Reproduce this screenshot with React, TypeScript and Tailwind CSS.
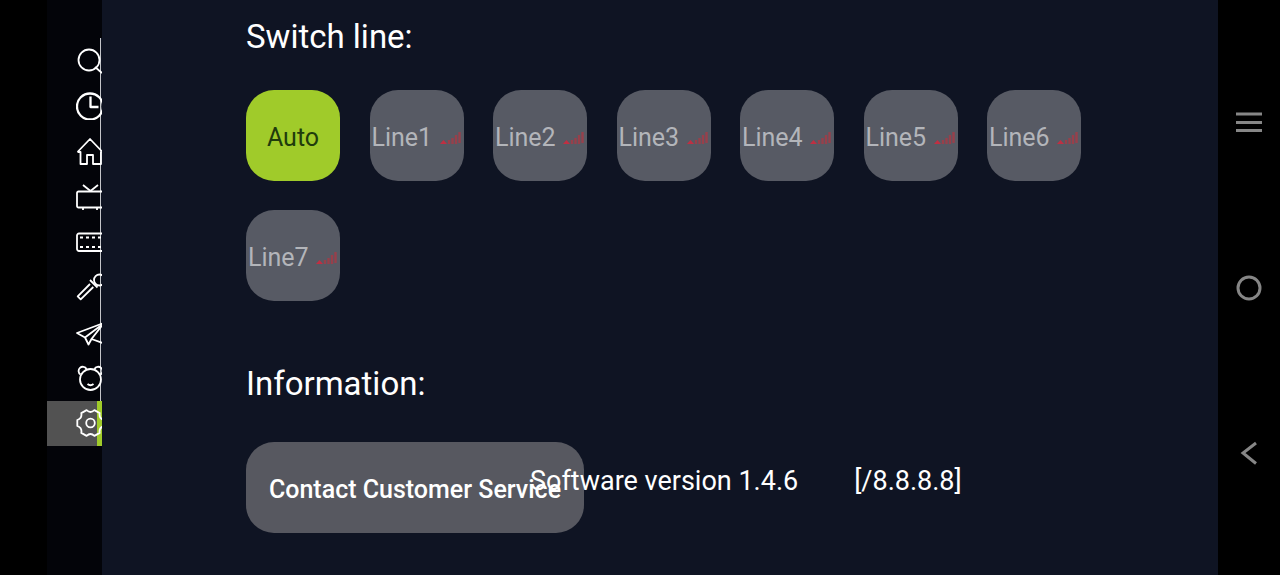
import type { ReactNode } from 'react';

const navItems: { label: string; icon: ReactNode }[] = [
  {
    label: 'Search',
    icon: (
      <>
        <circle cx="13" cy="13" r="10.5" />
        <path d="M19 20l7 6" />
      </>
    ),
  },
  {
    label: 'History',
    icon: (
      <>
        <circle cx="14" cy="14.5" r="13" strokeWidth="2.3" />
        <path d="M14.5 4.5v10.5h8" strokeWidth="2.3" />
      </>
    ),
  },
  {
    label: 'Home',
    icon: <path d="M1.5 15L14 2 26.5 15M1.500 15h3v12h6.500v-9h6v9h8V15" />,
  },
  {
    label: 'Live TV',
    icon: (
      <>
        <rect x="1" y="8.5" width="30" height="16" rx="1.5" />
        <path d="M7 2l7.5 6L22 2M7 25v2M21 25v2" />
      </>
    ),
  },
  {
    label: 'Movies',
    icon: (
      <>
        <rect x="1" y="5.5" width="30" height="17.5" rx="2" />
        <path d="M4 9.5h26M4 19h26" strokeDasharray="3 3" />
      </>
    ),
  },
  {
    label: 'Shows',
    icon: (
      <>
        <path d="M14 11L1.700 23.300l3 3L17.300 14M14 7l7.500 7.500" />
        <circle cx="23.5" cy="7" r="5.5" />
      </>
    ),
  },
  {
    label: 'Shared',
    icon: (
      <>
        <path d="M29 3.500L1 14l8 4.500 3.500 7 3-5.500L28 24.500z" />
        <path d="M28 4L9 18.500M28 4L15.500 20" />
      </>
    ),
  },
  {
    label: 'Kids',
    icon: (
      <>
        <circle cx="14.5" cy="15.5" r="10.5" />
        <path d="M4.500 10.500a4.200 4.200 0 1 1 6-5.500M18.500 5a4.200 4.200 0 1 1 6 5.500M11.500 20q3 2.500 6 0" />
      </>
    ),
  },
  {
    label: 'Settings',
    icon: (
      <>
        <path d="M1.300 17V11Q6.300 9.200 5.300 4.100L10.600 1.100Q14.500 4.800 18.400 1.100L23.700 4.100Q22.700 9.200 27.700 11V17Q22.700 18.800 23.700 23.900L18.400 26.900Q14.500 23.200 10.600 26.900L5.300 23.900Q6.300 18.800 1.300 17z" />
        <circle cx="14.5" cy="14" r="4.3" />
      </>
    ),
  },
];

const lines = ['Line1', 'Line2', 'Line3', 'Line4', 'Line5', 'Line6', 'Line7'];

function SignalIcon() {
  return (
    <svg viewBox="0 0 24 16" className="h-4 w-6 shrink-0" aria-hidden="true">
      <path d="M2 14l3.500-4L9 14z" fill="#c02f42" />
      <path
        d="M11 14v-4M14.500 14V8M18 14V5M21.500 13V2"
        stroke="#a83a46"
        strokeWidth="2.4"
        opacity="0.8"
      />
    </svg>
  );
}

function SideNav() {
  return (
    <nav className="w-[55px] shrink-0 overflow-hidden bg-[#030409] pt-[38px]">
      <ul className="grid h-[408px] auto-rows-fr grid-cols-1">
        {navItems.map((item) => {
          const active = item.label === 'Settings';
          return (
            <li key={item.label} className="min-w-0">
              <button
                type="button"
                aria-label={item.label}
                className={
                  active
                    ? 'flex h-full w-full items-center border-r-[5px] border-[#a0cb2a] bg-[#525252] pl-[29px]'
                    : 'flex h-full w-full items-center pl-[29px] shadow-[inset_-1px_0_#0f1423,inset_-2px_0_#c4c6ca]'
                }
              >
                <svg
                  viewBox="0 0 29 28"
                  className="h-7 w-[29px] shrink-0"
                  fill="none"
                  stroke="#fff"
                  strokeWidth="1.8"
                  strokeLinejoin="round"
                  aria-hidden="true"
                >
                  {item.icon}
                </svg>
              </button>
            </li>
          );
        })}
      </ul>
    </nav>
  );
}

function SystemBar() {
  return (
    <aside className="flex w-[62px] shrink-0 flex-col items-center justify-between bg-black py-[108px]">
      <button type="button" aria-label="Recent apps">
        <svg viewBox="0 0 28 28" className="size-7" stroke="#868686" strokeWidth="3">
          <path d="M1 6h26M1 14.500h26M1 22.500h26" />
        </svg>
      </button>
      <button type="button" aria-label="Home screen">
        <svg viewBox="0 0 28 28" className="size-7" fill="none" stroke="#868686" strokeWidth="3">
          <circle cx="14" cy="14" r="11" />
        </svg>
      </button>
      <button type="button" aria-label="Back">
        <svg viewBox="0 0 28 28" className="size-7" fill="none" stroke="#868686" strokeWidth="3">
          <path d="M21 4L8 14l13 10.500" />
        </svg>
      </button>
    </aside>
  );
}

export default function App() {
  return (
    <div className="flex h-screen overflow-hidden bg-black pl-[47px] font-['Roboto',sans-serif] text-white">
      <SideNav />
      <main className="min-w-0 flex-1 bg-[#0f1423] pt-[17px] pr-[137px] pl-36">
        <section>
          <h2 className="text-[33px] leading-10">Switch line:</h2>
          <div className="mt-[33px] grid grid-cols-[repeat(7,94px)] justify-between gap-y-[29px] text-[25px]">
            <button
              type="button"
              className="h-[91px] rounded-[28px] bg-[#a0cb2a] pt-1 text-[#203c0c]"
            >
              Auto
            </button>
            {lines.map((line) => (
              <button
                key={line}
                type="button"
                className="flex h-[91px] items-center justify-between rounded-[28px] bg-[#575a64] px-0.5 pt-1 text-[#b3b5ba]"
              >
                {line}
                <SignalIcon />
              </button>
            ))}
          </div>
        </section>

        <section className="mt-[63px]">
          <h2 className="text-[33px] leading-10">Information:</h2>
          <div className="mt-[38px] flex items-start">
            <button
              type="button"
              className="h-[91px] w-[338px] shrink-0 rounded-[28px] bg-[#575860] pt-1 text-[25px] font-medium whitespace-nowrap"
            >
              Contact Customer Service
            </button>
            {/* version text runs over the end of the button */}
            <p className="-ml-[54px] flex gap-14 pt-[19px] text-[27px] leading-10 whitespace-nowrap">
              <span>Software version 1.4.6</span>
              <span>[/8.8.8.8]</span>
            </p>
          </div>
        </section>
      </main>
      <SystemBar />
    </div>
  );
}
